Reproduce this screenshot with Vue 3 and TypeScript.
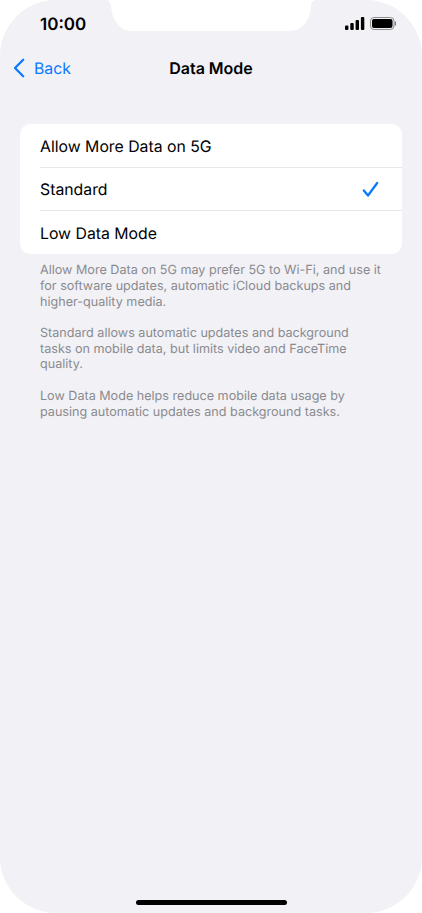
<script setup lang="ts">
const options = [
  { label: 'Allow More Data on 5G', selected: false },
  { label: 'Standard', selected: true },
  { label: 'Low Data Mode', selected: false },
]
const notes = [
  ['Allow More Data on 5G may prefer 5G to Wi-Fi, and use it', 'for software updates, automatic iCloud backups and', 'higher-quality media.'],
  ['Standard allows automatic updates and background', 'tasks on mobile data, but limits video and FaceTime', 'quality.'],
  ['Low Data Mode helps reduce mobile data usage by', 'pausing automatic updates and background tasks.'],
]
</script>

<template>
  <div class="screen">
    <svg class="notch" width="222" height="32" viewBox="0 0 222 32" aria-hidden="true">
      <path d="M0 0H6C9.5 0 10.6 3 11 7C12.5 21 20 31 32 31H190C202 31 209.500 21 211 7C211.400 3 212.500 0 216 0H222V0Z" fill="#fff" />
    </svg>
    <header class="status">
      <span class="time">10:00</span>
      <div class="indicators">
        <svg width="19.500" height="13" viewBox="0 0 19.500 13" aria-hidden="true">
          <rect x="0" y="8.500" width="3.400" height="4.500" rx="1" />
          <rect x="5.300" y="6" width="3.400" height="7" rx="1" />
          <rect x="10.600" y="3" width="3.400" height="10" rx="1" />
          <rect x="15.900" y="0" width="3.400" height="13" rx="1" />
        </svg>
        <svg width="26" height="13" viewBox="0 0 26 13" aria-hidden="true">
          <rect x="0.500" y="0.500" width="23.500" height="12" rx="3.500" fill="none" stroke="#8e8e90" />
          <rect x="2" y="2" width="20.500" height="9" rx="2" />
          <rect x="24.800" y="4.500" width="1.200" height="4" rx="0.600" fill="#77777a" />
        </svg>
      </div>
    </header>
    <nav class="nav">
      <div class="back">
        <svg width="12" height="20" viewBox="0 0 12 20" aria-hidden="true">
          <path d="M10.200 1.800L2 10L10.200 18.200" fill="none" stroke="#0a7aff" stroke-width="2.300" stroke-linecap="round" stroke-linejoin="round" />
        </svg>
        <span class="back-label">Back</span>
      </div>
      <h1>Data Mode</h1>
    </nav>
    <main class="content">
      <ul class="card">
        <li v-for="option in options" :key="option.label" class="row">
          <span>{{ option.label }}</span>
          <svg v-if="option.selected" class="check" width="17" height="17" viewBox="0 0 17 17" aria-hidden="true">
            <path d="M1.800 9.500L6 14.500L15.200 2" fill="none" stroke="#0a7aff" stroke-width="2.300" stroke-linecap="round" stroke-linejoin="round" />
          </svg>
        </li>
      </ul>
      <div class="notes">
        <p v-for="(note, i) in notes" :key="i">
          <span v-for="line in note" :key="line" class="line">{{ line }}</span>
        </p>
      </div>
    </main>
    <div class="home-wrap"><div class="home"></div></div>
  </div>
</template>

<style scoped>
.screen {
  position: relative;
  display: flex;
  flex-direction: column;
  box-sizing: border-box;
  width: 422px;
  height: 913px;
  overflow: hidden;
  background: #f1f1f6;
  border-radius: 56px;
  font-family: Inter, "Liberation Sans", sans-serif;
  color: #000;
  text-rendering: geometricPrecision;
}
.notch {
  position: absolute;
  top: 0;
  left: 100px;
}
.status {
  display: flex;
  align-items: center;
  justify-content: space-between;
  height: 47px;
  padding: 0 26px 0 40px;
}
.time {
  padding-top: 2px;
  font-size: 17px;
  font-weight: 600;
  line-height: 48px;
}
.indicators {
  display: flex;
  align-items: center;
  gap: 5.500px;
}
.nav {
  position: relative;
  display: flex;
  align-items: center;
  justify-content: center;
  height: 41px;
}
.nav h1 {
  margin: 0;
  font-size: 16px;
  font-weight: 600;
}
.back {
  position: absolute;
  left: 13px;
  top: 0;
  bottom: 0;
  display: flex;
  align-items: center;
  gap: 9px;
  color: #0a7aff;
  font-size: 15.800px;
}
.back-label {
  padding-top: 1px;
}
.content {
  flex: 1;
  padding: 36px 20px 0;
}
.card {
  margin: 0;
  padding: 0 0 0 20px;
  list-style: none;
  background: #fff;
  border-radius: 10px;
}
.row {
  display: flex;
  align-items: center;
  justify-content: space-between;
  box-sizing: border-box;
  height: 43px;
  padding-top: 1px;
  padding-right: 23px;
  font-size: 15.800px;
  border-bottom: 1px solid #e8e8ea;
}
.row:first-child {
  height: 44px;
}
.row:last-child {
  border-bottom: none;
}
.notes {
  padding: 9px 20px 0 20px;
  color: #8a8a8e;
  font-size: 12.600px;
  line-height: 15.800px;
}
.notes p {
  margin: 0 0 15.500px;
}
.line {
  display: block;
  white-space: nowrap;
}
.home-wrap {
  display: flex;
  justify-content: center;
  padding-bottom: 8px;
}
.home {
  width: 151px;
  height: 5px;
  background: #000;
  border-radius: 3px;
}
</style>

<style>
body {
  background: #fff;
}
</style>
